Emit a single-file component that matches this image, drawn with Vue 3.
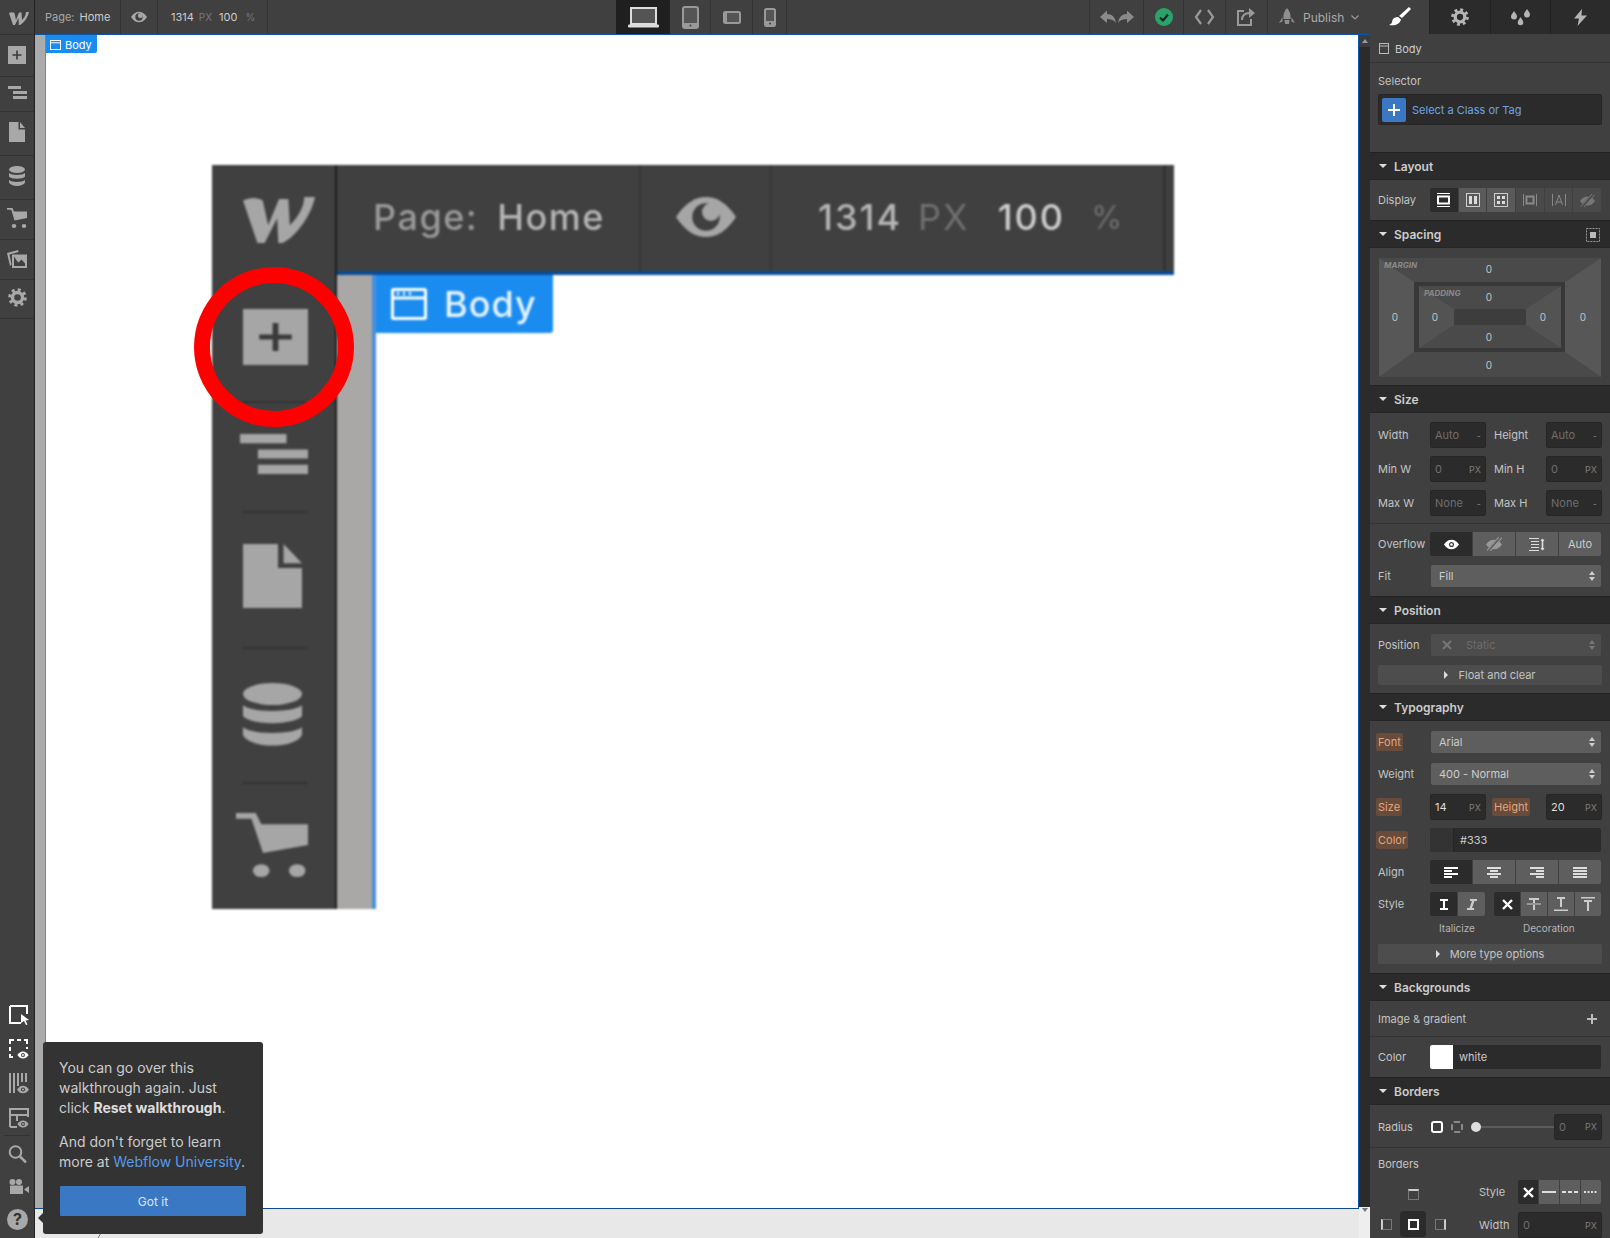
<script setup>
const sizeRows = [
  ['Width', 'Auto', '-', 'Height', 'Auto', '-'],
  ['Min W', '0', 'PX', 'Min H', '0', 'PX'],
  ['Max W', 'None', '-', 'Max H', 'None', '-']
]
const railTop = [
  { id: 'i-plus', w: 18, h: 18, pad: 11, height: 42 },
  { id: 'i-tree', w: 19, h: 13, pad: 9, height: 35 },
  { id: 'i-page', w: 16, h: 20, pad: 10, height: 44 },
  { id: 'i-db', w: 16, h: 20, pad: 10, height: 44 },
  { id: 'i-cart', w: 20, h: 20, pad: 8, height: 40 },
  { id: 'i-media', w: 20, h: 18, pad: 10, height: 40 },
  { id: 'i-gear', w: 19, h: 19, pad: 8, height: 39 }
]
const shotRail = [
  { id: 'i-plus', w: 65, h: 56, top: 36, height: 130, dx: 2 },
  { id: 'i-tree', w: 68, h: 40, top: 31, height: 110, dx: 0 },
  { id: 'i-page', w: 59, h: 64, top: 31, height: 136, dx: -1 },
  { id: 'i-db', w: 59, h: 63, top: 34, height: 135, dx: -1 },
  { id: 'i-cart', w: 72, h: 64, top: 29, height: 125, dx: -2 }
]
</script>

<template>
  <div class="app">
    <svg class="defs" width="0" height="0" aria-hidden="true">
      <symbol id="i-w" viewBox="0 0 20 13" preserveAspectRatio="none"><path d="M0 1C2 0 4 0 5.500 1L7 8 10 .6h2.600L13 8c2-2 4-5 4-8h3c-1 5-5 11-9 13h-1.200L9.500 6 6 13H4Z" /></symbol>
      <symbol id="i-plus" viewBox="0 0 18 18" preserveAspectRatio="none"><rect width="18" height="18" /><path d="M8.200 4.500h1.600V8.200h3.700v1.600H9.800v3.700H8.200V9.800H4.500V8.200h3.700Z" fill="#3a3a3a" /></symbol>
      <symbol id="i-tree" viewBox="0 0 19 13" preserveAspectRatio="none"><path d="M0 0h13v3H0ZM5 5h14v3H5ZM5 10h14v3H5Z" /></symbol>
      <symbol id="i-page" viewBox="0 0 16 20" preserveAspectRatio="none"><path d="M0 0h9.500v7.500H16V20H0ZM11 0l5 6h-5Z" /></symbol>
      <symbol id="i-db" viewBox="0 0 16 20" preserveAspectRatio="none"><ellipse cx="8" cy="3.500" rx="8" ry="3.500" /><path d="M0 7c2 2.500 14 2.500 16 0v3.500c-2 3-14 3-16 0ZM0 14c2 2.500 14 2.500 16 0v2.500c-2 4.500-14 4.500-16 0Z" /></symbol>
      <symbol id="i-cart" viewBox="0 0 20 20" preserveAspectRatio="none"><path d="M0 0h5.500L7 3.500h13V10L7.500 12.500 4.300 1.800H0Z" /><ellipse cx="7" cy="18" rx="2.300" ry="2" /><ellipse cx="17" cy="18" rx="2.300" ry="2" /></symbol>
      <symbol id="i-media" viewBox="0 0 20 18" preserveAspectRatio="none"><path d="M0 3 11 0l.6 2L2.500 4.500l2 10L3 16Z" /><path fill-rule="evenodd" d="M5 4.500h15V18H5ZM7 6.500v9.500h11v-2.500l-3.500-4-3 3-1.500-1.500Z" /></symbol>
      <symbol id="i-gear" viewBox="0 0 20 20"><circle cx="10" cy="10" r="8" fill="none" stroke="currentColor" stroke-width="3.600" stroke-dasharray="3.100 3.180" /><circle cx="10" cy="10" r="5.300" fill="none" stroke="currentColor" stroke-width="3.600" /></symbol>
      <symbol id="i-eye" viewBox="0 0 24 16"><path d="M0 8C4 2 8 0 12 0s8 2 12 8c-4 6-8 8-12 8S4 14 0 8Z" /><circle cx="12" cy="8" r="5.500" fill="#404040" /><circle cx="14" cy="6" r="3.600" /></symbol>
      <symbol id="i-eye2" viewBox="0 0 14 10"><path d="M0 5C2 2 4 .5 7 .5S12 2 14 5c-2 3-4 4.500-7 4.500S2 8 0 5Z" /><circle cx="7" cy="5" r="2.400" fill="#404040" /><circle cx="7" cy="5" r="1.200" /></symbol>
    </svg>

    <!-- left rail -->
    <nav class="rail">
      <div class="rail-logo"><svg class="ic" width="20" height="13"><use href="#i-w" /></svg></div>
      <div v-for="i in railTop" :key="i.id" class="rail-cell" :style="{ height: i.height + 'px', paddingTop: i.pad + 'px' }">
        <svg class="ic" :width="i.w" :height="i.h"><use :href="'#' + i.id" /></svg>
      </div>
      <div class="rail-fill"></div>
      <div class="rail-bottom">
        <svg class="b-cursor" width="21" height="20" viewBox="0 0 21 20"><path d="M1 1h17v8M12 18H1V1" fill="none" stroke="#fff" stroke-width="2" /><path d="M12 9l8 6-3.500.5 2 4-1.500.5-2-4-3 2Z" fill="#fff" /></svg>
        <svg class="b-dash" width="20" height="20" viewBox="0 0 20 20"><path d="M1 5V1h4M8 1h4M15 1h3v4M18 8v2M1 8v4M1 15v3h3" fill="none" stroke="#fff" stroke-width="2" /><use href="#i-eye2" x="8" y="12" width="12" height="8" fill="#fff" /></svg>
        <svg class="b-bars" width="20" height="21" viewBox="0 0 20 21"><path d="M1 0v20M5 0v20M9 0v13M13 0v9M17 0v9" stroke="#a8a8a8" stroke-width="2" fill="none" /><use href="#i-eye2" x="8" y="12" width="12" height="9" fill="#a8a8a8" /></svg>
        <svg class="b-lay" width="20" height="20" viewBox="0 0 20 20"><path d="M1 19V1h18v8M1 7h18M8 7v6M1 19h7" fill="none" stroke="#a8a8a8" stroke-width="2" /><use href="#i-eye2" x="8" y="12" width="12" height="8" fill="#a8a8a8" /></svg>
        <div class="b-sep"></div>
        <svg class="b-search" width="20" height="18" viewBox="0 0 20 18"><circle cx="7.500" cy="7" r="5.800" fill="none" stroke="#a8a8a8" stroke-width="2" /><path d="M12 11.500l6 6" stroke="#a8a8a8" stroke-width="2.500" /></svg>
        <svg class="b-cam" width="20" height="15" viewBox="0 0 20 15"><circle cx="3.500" cy="3" r="3" fill="#a8a8a8" /><circle cx="10" cy="3" r="3" fill="#a8a8a8" /><rect x="1" y="6.500" width="13" height="8.500" fill="#a8a8a8" /><path d="M15 10.500l5-3.500v7Z" fill="#a8a8a8" /></svg>
        <div class="b-help">?</div>
      </div>
    </nav>

    <!-- top bar -->
    <header class="top">
      <div class="top-left">
        <div class="t-page"><span class="dim">Page:</span><span class="lt">Home</span></div>
        <div class="t-eye"><svg class="ic" width="16" height="12"><use href="#i-eye" /></svg></div>
        <div class="t-size"><span class="lt">1314</span><span class="dim2">PX</span><span class="lt ml">100</span><span class="dim2 ml2">%</span></div>
      </div>
      <div class="devices">
        <div class="dev on"><svg width="31" height="21" viewBox="0 0 31 21"><path d="M3 1h25v16H3Z" fill="#555" stroke="#ddd" stroke-width="2" /><rect y="17.500" width="31" height="3" rx="1" fill="#ddd" /></svg></div>
        <div class="dev"><svg width="17" height="23" viewBox="0 0 17 23"><rect x="1" y="1" width="15" height="21" rx="2" fill="#555" stroke="#999" stroke-width="2" /><rect x="1" y="17" width="15" height="5" fill="#999" /><circle cx="8.500" cy="19.500" r="1" fill="#404040" /></svg></div>
        <div class="dev w42"><svg width="18" height="13" viewBox="0 0 18 13"><rect x="1" y="1" width="16" height="11" rx="1.500" fill="#555" stroke="#999" stroke-width="2" /><rect x="1" y="1" width="3" height="11" fill="#999" /></svg></div>
        <div class="dev w34"><svg width="12" height="19" viewBox="0 0 12 19"><rect x="1" y="1" width="10" height="17" rx="1.500" fill="#555" stroke="#999" stroke-width="2" /><rect x="1" y="13" width="10" height="5" fill="#999" /><circle cx="6" cy="15.500" r="1" fill="#404040" /></svg></div>
      </div>
      <div class="top-right">
        <div class="tr w54"><svg width="34" height="14" viewBox="0 0 34 14" fill="#8a8a8a"><path d="M0 7L7 .5V4c5 0 8 3 9 9-2-3-5-4-9-4v4ZM34 7L27 .5V4c-5 0-8 3-9 9 2-3 5-4 9-4v4Z" /></svg></div>
        <div class="tr w40"><svg width="18" height="18" viewBox="0 0 18 18"><circle cx="9" cy="9" r="9" fill="#2aa36b" /><path d="M5 9.500l3 3 5-6" fill="none" stroke="#1c1c1c" stroke-width="2" /></svg></div>
        <div class="tr w42"><svg width="21" height="16" viewBox="0 0 21 16" fill="none" stroke="#999" stroke-width="2.200"><path d="M7 1L2 8l5 7M14 1l5 7-5 7" /></svg></div>
        <div class="tr w42"><svg width="19" height="18" viewBox="0 0 19 18" fill="none" stroke="#999" stroke-width="2"><path d="M7 3H1v14h13v-6" /><path d="M5 12c0-5 3-7 8-7" /><path d="M12 0l6 5-6 5Z" fill="#999" stroke="none" /></svg></div>
        <div class="tr publish">
          <svg width="18" height="18" viewBox="0 0 18 18" fill="#8f8f8f"><path d="M9 0c3 3 4 7 3.500 11h-7C5 7 6 3 9 0ZM4.500 9L1 15l3.500-1.500ZM13.500 9L17 15l-3.500-1.500ZM6.500 12h5l-.5 4H7Z" /></svg>
          <span>Publish</span>
          <svg width="8" height="5" viewBox="0 0 8 5" fill="none" stroke="#999" stroke-width="1.200"><path d="M.5.500L4 4 7.500.500" /></svg>
        </div>
      </div>
    </header>

    <!-- right panel -->
    <aside class="panel">
      <div class="tabs">
        <div class="tab on"><svg width="22" height="20" viewBox="0 0 22 20" fill="#fff"><path d="M20 0l2 2-9 9-3-2ZM9 10l3 2.500C11 17 6 19 0 18c3-1 3-3 3.500-5S7 10 9 10Z" /></svg></div>
        <div class="tab"><svg class="g" width="18" height="18"><use href="#i-gear" /></svg></div>
        <div class="tab"><svg width="19" height="17" viewBox="0 0 19 17" fill="#b5b5b5"><path d="M3 2c2 3 3 4 3 5.500a3 3 0 0 1-6 0C0 6 1 5 3 2ZM16 0c2 3 3 4 3 5.500a3 3 0 0 1-6 0C13 4 14 3 16 0ZM9.500 8c1.800 3 2.800 4 2.800 5.500a2.800 2.800 0 0 1-5.600 0C6.700 12 7.700 11 9.500 8Z" /></svg></div>
        <div class="tab"><svg width="13" height="17" viewBox="0 0 13 17" fill="#b5b5b5"><path d="M8 0L0 9.500h5L3.500 17 13 6.500H7.500Z" /></svg></div>
      </div>

      <div class="p-body"><svg width="10" height="11" viewBox="0 0 10 11" fill="none" stroke="#bbb"><rect x=".5" y=".5" width="9" height="10" /><path d="M.5 3h9" /></svg><span>Body</span></div>
      <div class="p-sel">
        <div class="l">Selector</div>
        <div class="sel-in"><div class="sel-plus"><svg width="12" height="12" viewBox="0 0 12 12" fill="#fff"><path d="M5 0h2v5h5v2H7v5H5V7H0V5h5Z" /></svg></div><span>Select a Class or Tag</span></div>
      </div>

      <div class="hdr"><i></i>Layout</div>
      <div class="row-display">
        <span class="l">Display</span>
        <div class="seg h24 wide">
          <div class="dk"><svg width="13" height="14" viewBox="0 0 13 14" fill="none" stroke="#fff"><path d="M0 .5h13M0 13.500h13" /><rect x="1" y="3.500" width="11" height="7" stroke-width="2" /></svg></div>
          <div class="md"><svg width="14" height="14" viewBox="0 0 14 14"><rect x=".5" y=".5" width="13" height="13" fill="none" stroke="#ccc" /><path d="M3 3h3v8H3ZM8 3h3v8H8Z" fill="#ddd" /></svg></div>
          <div class="md"><svg width="14" height="14" viewBox="0 0 14 14"><rect x=".5" y=".5" width="13" height="13" fill="none" stroke="#ccc" /><path d="M3 3h3v3H3ZM8 3h3v3H8ZM3 8h3v3H3ZM8 8h3v3H8Z" fill="#ddd" /></svg></div>
          <div class="lo"><svg width="14" height="12" viewBox="0 0 14 12" fill="none" stroke="#888"><path d="M.5 0v12M13.500 0v12" /><rect x="3.500" y="2.500" width="7" height="7" stroke-width="2" /></svg></div>
          <div class="lo"><svg width="14" height="12" viewBox="0 0 14 12" fill="none" stroke="#888"><path d="M.5 0v12M13.500 0v12M3.500 11L7 1l3.500 10M4.500 8h5" /></svg></div>
          <div class="lo"><svg width="15" height="13" viewBox="0 0 15 13"><path d="M0 7C2 4 4.500 2.500 7.500 2.500S13 4 15 7c-2 3-4.500 4.500-7.500 4.500S2 10 0 7Z" fill="#777" /><path d="M2 13L13 0" stroke="#4a4a4a" stroke-width="3" /><path d="M1 12.500L12 0M4 13L15 .5" stroke="#777" /></svg></div>
        </div>
      </div>

      <div class="hdr"><i></i>Spacing
        <svg class="sp-ic" width="14" height="14" viewBox="0 0 14 14"><rect x=".5" y=".5" width="13" height="13" fill="none" stroke="#999" stroke-dasharray="2 1" /><rect x="4" y="4" width="6" height="6" fill="#bbb" /></svg>
      </div>
      <div class="spacing">
        <svg width="222" height="119" viewBox="0 0 222 119">
          <rect width="222" height="119" fill="#4d4d4d" stroke="#3a3a3a" />
          <path d="M0 0L35 24V94L0 119ZM222 0L186 24V94L222 119Z" fill="#575757" />
          <path d="M0 0L35 24H186L222 0ZM0 119L35 94H186L222 119Z" fill="#4a4a4a" />
          <rect x="35" y="24" width="151" height="70" rx="1" fill="#383838" />
          <rect x="40" y="28" width="142" height="62" fill="#4a4a4a" />
          <path d="M40 28L75 51V67L40 90ZM182 28L147 51V67L182 90Z" fill="#535353" />
          <rect x="75" y="51" width="72" height="16" rx="1" fill="#3d3d3d" />
          <text class="tag" x="5" y="9.500">MARGIN</text>
          <text class="tag" x="45" y="37.500">PADDING</text>
          <text class="v" x="110" y="15">0</text>
          <text class="v" x="110" y="43">0</text>
          <text class="v" x="16" y="63">0</text>
          <text class="v" x="56" y="63">0</text>
          <text class="v" x="164" y="63">0</text>
          <text class="v" x="204" y="63">0</text>
          <text class="v" x="110" y="83">0</text>
          <text class="v" x="110" y="111">0</text>
        </svg>
      </div>

      <div class="hdr"><i></i>Size</div>
      <div class="size-grid">
        <div v-for="r in sizeRows" :key="r[0]" class="size-row">
          <span class="l lw">{{ r[0] }}</span>
          <div class="inp"><span class="ph">{{ r[1] }}</span><em>{{ r[2] }}</em></div>
          <span class="l lw2">{{ r[3] }}</span>
          <div class="inp"><span class="ph">{{ r[4] }}</span><em>{{ r[5] }}</em></div>
        </div>
      </div>
      <div class="over">
        <div class="frow">
          <span class="l">Overflow</span>
          <div class="seg h24 wide">
            <div class="dk"><svg width="15" height="11" viewBox="0 0 14 10"><use href="#i-eye2" width="14" height="10" fill="#fff" /></svg></div>
            <div class="br"><svg width="16" height="14" viewBox="0 0 15 13"><path d="M0 7C2 4 4.500 2.500 7.500 2.500S13 4 15 7c-2 3-4.500 4.500-7.500 4.500S2 10 0 7Z" fill="#999" /><path d="M2 13L13 0" stroke="#5e5e5e" stroke-width="3" /><path d="M1 12.500L12 0M4 13L15 .5" stroke="#999" /></svg></div>
            <div class="br"><svg width="16" height="13" viewBox="0 0 16 13" fill="none" stroke="#ddd"><path d="M0 .5h10M2 3.500h8M2 6.500h8M2 9.500h8M0 12.500h10" /><path d="M13.500 1v11" stroke-width="1.600" /><path d="M11.500 3l2-2.500 2 2.500ZM11.500 10l2 2.500 2-2.500Z" fill="#ddd" stroke="none" /></svg></div>
            <div class="br txt">Auto</div>
          </div>
        </div>
        <div class="frow mt9"><span class="l">Fit</span><div class="select h22"><span>Fill</span><b></b></div></div>
      </div>

      <div class="hdr"><i></i>Position</div>
      <div class="pos">
        <div class="frow"><span class="l">Position</span><div class="select h22 off"><svg width="10" height="10" viewBox="0 0 10 10" stroke="#777" stroke-width="2"><path d="M1 1l8 8M9 1l-8 8" /></svg><span class="st">Static</span><b></b></div></div>
        <div class="expand mt9 h20"><i></i>Float and clear</div>
      </div>

      <div class="hdr"><i></i>Typography</div>
      <div class="typo">
        <div class="frow"><span class="l"><mark>Font</mark></span><div class="select h22"><span>Arial</span><b></b></div></div>
        <div class="frow mt10"><span class="l">Weight</span><div class="select h22"><span>400 - Normal</span><b></b></div></div>
        <div class="size-row mt9">
          <span class="l lw"><mark>Size</mark></span>
          <div class="inp"><span>14</span><em>PX</em></div>
          <span class="l lw2"><mark>Height</mark></span>
          <div class="inp"><span>20</span><em>PX</em></div>
        </div>
        <div class="frow mt8"><span class="l"><mark>Color</mark></span><div class="color"><div class="sw dark"></div><span>#333</span></div></div>
        <div class="frow mt8">
          <span class="l">Align</span>
          <div class="seg h24 wide">
            <div class="dk"><svg width="14" height="11" viewBox="0 0 14 11" fill="#fff"><path d="M0 0h14v2H0ZM0 3h8v2H0ZM0 6h14v2H0ZM0 9h8v2H0Z" /></svg></div>
            <div class="br"><svg width="14" height="11" viewBox="0 0 14 11" fill="#ddd"><path d="M0 0h14v2H0ZM3 3h8v2H3ZM0 6h14v2H0ZM3 9h8v2H3Z" /></svg></div>
            <div class="br"><svg width="14" height="11" viewBox="0 0 14 11" fill="#ddd"><path d="M0 0h14v2H0ZM6 3h8v2H6ZM0 6h14v2H0ZM6 9h8v2H6Z" /></svg></div>
            <div class="br"><svg width="14" height="11" viewBox="0 0 14 11" fill="#ddd"><path d="M0 0h14v2H0ZM0 3h14v2H0ZM0 6h14v2H0ZM0 9h14v2H0Z" /></svg></div>
          </div>
        </div>
        <div class="frow mt8 style-row">
          <span class="l">Style</span>
          <div class="seg h24 s2">
            <div class="dk"><svg width="8" height="11" viewBox="0 0 8 11" fill="#fff"><path d="M0 0h8v2H5v7h3v2H0V9h3V2H0Z" /></svg></div>
            <div class="br"><svg width="10" height="11" viewBox="0 0 10 11" fill="#ccc"><path d="M3 0h7v2H7.500L5 9h2v2H0V9h2.500L5 2H3Z" /></svg></div>
          </div>
          <div class="seg h24 s4">
            <div class="dk"><svg width="11" height="11" viewBox="0 0 11 11" stroke="#fff" stroke-width="2.400"><path d="M1 1l9 9M10 1l-9 9" /></svg></div>
            <div class="br"><svg width="14" height="12" viewBox="0 0 14 12" fill="#ccc"><path d="M2 0h10v2H8v3H6V2H2ZM0 5.500h14v1H0ZM6 7h2v5H6Z" /></svg></div>
            <div class="br"><svg width="14" height="14" viewBox="0 0 14 14" fill="#ccc"><path d="M3 0h8v2H8v8H6V2H3ZM0 12.500h14v1.500H0Z" /></svg></div>
            <div class="br"><svg width="14" height="14" viewBox="0 0 14 14" fill="#ccc"><path d="M0 0h14v1.500H0ZM3 3h8v2H8v9H6V5H3Z" /></svg></div>
          </div>
        </div>
        <div class="caps"><span>Italicize</span><span>Decoration</span></div>
        <div class="expand mt8 h20"><i></i>More type options</div>
      </div>

      <div class="hdr"><i></i>Backgrounds</div>
      <div class="img-row"><span class="l">Image &amp; gradient</span><svg width="10" height="10" viewBox="0 0 10 10" fill="#bbb"><path d="M4 0h2v4h4v2H6v4H4V6H0V4h4Z" /></svg></div>
      <div class="bg-color frow"><span class="l">Color</span><div class="color"><div class="sw"></div><span>white</span></div></div>

      <div class="hdr"><i></i>Borders</div>
      <div class="radius">
        <span class="l">Radius</span>
        <div class="r-ic on"></div><div class="r-ic dash"></div>
        <div class="slider"><div class="knob"></div></div>
        <div class="inp r-in"><span class="ph">0</span><em>PX</em></div>
      </div>
      <div class="borders">
        <div class="l">Borders</div>
        <div class="bd-grid">
          <div class="bd-pick">
            <div class="bi top"></div>
            <div class="bi left"></div><div class="bi-on"><div class="bi all"></div></div><div class="bi right"></div>
          </div>
          <div class="bd-ctl">
            <div class="bd-line">
              <span class="l">Style</span>
              <div class="seg h24 bs">
                <div class="dk"><svg width="11" height="11" viewBox="0 0 11 11" stroke="#fff" stroke-width="2.400"><path d="M1 1l9 9M10 1l-9 9" /></svg></div>
                <div class="br"><svg width="14" height="2"><rect width="14" height="2" fill="#ddd" /></svg></div>
                <div class="br"><svg width="16" height="2"><path d="M0 1h16" stroke="#ddd" stroke-width="2" stroke-dasharray="4 2" /></svg></div>
                <div class="br"><svg width="14" height="2"><path d="M0 1h14" stroke="#ddd" stroke-width="2" stroke-dasharray="2 1.500" /></svg></div>
              </div>
            </div>
            <div class="bd-line mt8">
              <span class="l">Width</span>
              <div class="inp bw"><span class="ph">0</span><em>PX</em></div>
            </div>
          </div>
        </div>
      </div>
    </aside>

    <!-- canvas -->
    <main class="main">
      <div class="stage">
        <div class="view">
          <div class="gutter"></div>
          <div class="page">
            <div class="body-tag"><svg width="11" height="10" viewBox="0 0 11 10" fill="none" stroke="#fff"><rect x=".5" y=".5" width="10" height="9" /><path d="M.5 2.800h10" /></svg><span>Body</span></div>
            <div class="shot">
              <div class="shot-img">
                <div class="s-rail">
                  <div class="s-logo"><svg class="sic" width="72" height="46"><use href="#i-w" /></svg></div>
                  <div v-for="i in shotRail" :key="i.id" class="s-cell" :style="{ height: i.height + 'px', paddingTop: i.top + 'px' }">
                    <svg class="sic" :width="i.w" :height="i.h" :style="{ transform: 'translateX(' + i.dx + 'px)' }"><use :href="'#' + i.id" /></svg>
                  </div>
                </div>
                <div class="s-main">
                  <div class="s-top">
                    <div class="s-a"><span class="g1">Page:</span><span class="g2">Home</span></div>
                    <div class="s-b"><svg class="sic" width="60" height="42"><use href="#i-eye" /></svg></div>
                    <div class="s-c"><span class="g2">1314</span><span class="g3">PX</span><span class="g4">100</span><span class="g5">%</span></div>
                  </div>
                  <div class="s-under">
                    <div class="s-gutter"></div>
                    <div class="s-page">
                      <div class="s-tag"><svg width="36" height="32" viewBox="0 0 36 32" fill="none" stroke="#fff" stroke-width="3"><rect x="1.500" y="1.500" width="33" height="29" rx="1" /><path d="M1.500 10h33" /><path d="M6 5.500h2M12 5.500h2M18 5.500h2" /></svg><span>Body</span></div>
                    </div>
                  </div>
                </div>
              </div>
              <div class="ring"></div>
            </div>
          </div>
        </div>
        <div class="under"><svg class="nick" width="4" height="5" viewBox="0 0 4 5"><path d="M0 5L3 0" stroke="#777" /></svg></div>
      </div>
      <div class="scroll"><div class="sc-top"><span></span></div><div class="sc-end"><span></span></div></div>
    </main>

    <!-- tooltip -->
    <div class="tip">
      <p>You can go over this walkthrough again. Just click <strong>Reset walkthrough</strong>.</p>
      <p>And don't forget to learn more at <a>Webflow University</a>.</p>
      <button>Got it</button>
      <span class="tip-arrow"></span>
    </div>
  </div>
</template>

<style>
html, body { margin: 0; background: #404040; }
</style>

<style scoped>
.app { position: relative; width: 1610px; height: 1238px; overflow: hidden; display: grid; grid-template-columns: 35px 1fr 240px; grid-template-rows: 35px 1fr; font-family: Inter, "Liberation Sans", sans-serif; font-size: 11px; color: #ccc; background: #404040; }
.defs { position: absolute; }
.ic { fill: #a8a8a8; color: #a8a8a8; display: block; }

/* rail */
.rail { grid-column: 1; grid-row: 1 / 3; background: #404040; border-right: 1px solid #222; display: flex; flex-direction: column; align-items: stretch; height: 1238px; box-sizing: border-box; }
.rail-logo { height: 34px; box-sizing: border-box; padding: 12px 0 0 9px; }
.rail-cell { box-sizing: border-box; display: flex; justify-content: center; border-top: 1px solid #333; }
.rail-fill { flex: 1; border-top: 1px solid #333; }
.rail-bottom { height: 238px; display: flex; flex-direction: column; align-items: flex-start; padding-left: 9px; box-sizing: border-box; padding-top: 5px; }
.rail-bottom svg { display: block; flex: none; }
.b-dash { margin-top: 14px; }
.b-bars { margin-top: 14px; }
.b-lay { margin-top: 14px; }
.b-sep { width: 26px; height: 1px; background: #333; margin: 7px 0 0 -5px; flex: none; }
.b-search { margin-top: 9px; margin-left: -1px; }
.b-cam { margin-top: 16px; }
.b-help { width: 21px; height: 21px; border-radius: 50%; background: #a8a8a8; color: #333; font-weight: 700; font-size: 16px; line-height: 21px; text-align: center; margin: 15px 0 0 -2px; flex: none; }

/* top */
.top { grid-column: 2; grid-row: 1; background: #404040; border-bottom: 1px solid #0d56a6; position: relative; display: flex; justify-content: space-between; height: 35px; box-sizing: border-box; }
.top-left { display: flex; height: 34px; }
.top-left > div { display: flex; align-items: center; border-right: 1px solid #333; box-sizing: border-box; }
.t-page { width: 86px; padding-left: 10px; }
.t-page .dim { color: #a8a8a8; }
.t-page .lt { margin-left: 5px; color: #ccc; }
.t-eye { width: 37px; justify-content: center; }
.t-size { width: 110px; padding-left: 13px; }
.t-size .lt { color: #ccc; }
.t-size .dim2 { color: #777; margin-left: 5px; font-size: 10px; }
.t-size .ml { margin-left: 7px; }
.t-size .ml2 { margin-left: 8px; }
.devices { display: flex; height: 34px; position: absolute; left: 581px; top: 0; }
.dev { width: 41px; display: flex; align-items: center; justify-content: center; border-right: 1px solid #333; box-sizing: border-box; }
.dev.on { width: 54px; background: #1f1f1f; border-right: 0; }
.dev.w42 { width: 42px; } .dev.w34 { width: 34px; }
.top-right { display: flex; height: 34px; }
.tr { display: flex; align-items: center; justify-content: center; border-left: 1px solid #333; box-sizing: border-box; }
.w54 { width: 54px; } .w40 { width: 40px; } .w42 { width: 42px; }
.publish { width: 103px; gap: 7px; justify-content: flex-start; padding-left: 10px; color: #aaa; font-size: 12px; }

/* panel */
.panel { grid-column: 3; grid-row: 1 / 3; background: #404040; width: 240px; height: 1238px; overflow: hidden; z-index: 2; }
.tabs { display: flex; height: 34px; }
.tab { flex: 1; display: flex; align-items: center; justify-content: center; background: #2b2b2b; border-left: 1px solid #222; }
.tab.on { background: #404040; border-left: 0; }
.tab .g { color: #b5b5b5; }
.p-body { height: 29px; box-sizing: border-box; border-bottom: 1px solid #333; display: flex; align-items: center; gap: 6px; padding: 1px 0 0 9px; color: #ccc; }
.p-sel { height: 89px; padding: 10px 8px 0 8px; box-sizing: border-box; }
.p-sel .l { line-height: 16px; }
.sel-in { margin-top: 5px; height: 31px; background: #2b2b2b; border: 1px solid #262626; border-radius: 2px; box-sizing: border-box; display: flex; align-items: center; padding-left: 3px; gap: 6px; color: #6fa3e6; }
.sel-plus { width: 24px; height: 24px; background: #3b78c4; border-radius: 2px; display: flex; align-items: center; justify-content: center; }
.l { color: #c4c4c4; white-space: nowrap; }
.hdr { height: 28px; box-sizing: border-box; background: #2b2b2b; border-top: 1px solid #222; border-bottom: 1px solid #262626; display: flex; align-items: center; padding-left: 9px; font-size: 12px; font-weight: 600; color: #ccc; gap: 7px; position: relative; }
.hdr i { width: 0; height: 0; border-left: 4px solid transparent; border-right: 4px solid transparent; border-top: 4px solid #ddd; }
.sp-ic { position: absolute; right: 10px; top: 7px; }
.row-display { height: 40px; display: flex; align-items: center; padding: 0 9px 0 8px; justify-content: space-between; box-sizing: border-box; }
.seg { display: flex; border-radius: 2px; overflow: hidden; }
.seg > div { flex: 1; display: flex; align-items: center; justify-content: center; box-sizing: border-box; }
.h24 { height: 24px; } .h22 { height: 22px; } .h20 { height: 20px; }
.wide { width: 171px; }
.dk { background: #2b2b2b; }
.md { background: #5a5a5a; border-left: 1px solid #404040; }
.lo { background: #4a4a4a; border-left: 1px solid #404040; }
.br { background: #5e5e5e; border-left: 1px solid #404040; }
.txt { color: #ccc; }
.spacing { height: 137px; padding: 10px 0 0 9px; box-sizing: border-box; }
.spacing svg { display: block; }
.tag { font: italic 700 8px Inter, "Liberation Sans", sans-serif; fill: #8a8a8a; }
.v { font: 10px Inter, "Liberation Sans", sans-serif; fill: #c4c4c4; text-anchor: middle; }
.size-grid { padding: 9px 8px 8px; display: flex; flex-direction: column; gap: 8px; border-bottom: 1px solid #333; height: 111px; box-sizing: border-box; }
.size-row { display: flex; align-items: center; height: 26px; }
.lw { width: 52px; flex: none; }
.lw2 { width: 52px; margin-left: 8px; flex: none; }
.inp { width: 56px; height: 26px; box-sizing: border-box; background: #2b2b2b; border: 1px solid #262626; border-radius: 2px; display: flex; justify-content: space-between; align-items: center; padding: 0 4px; color: #ddd; flex: none; }
.inp .ph { color: #6e6e6e; }
.inp em { font-style: normal; color: #7d7d7d; font-size: 9px; }
.over { padding: 8px 9px 0 8px; height: 72px; box-sizing: border-box; }
.frow { display: flex; align-items: center; justify-content: space-between; }
.mt8 { margin-top: 8px; } .mt9 { margin-top: 9px; } .mt10 { margin-top: 10px; }
.select { width: 170px; background: #5e5e5e; border-radius: 2px; display: flex; align-items: center; padding-left: 8px; box-sizing: border-box; color: #ccc; position: relative; }
.select b { position: absolute; right: 6px; top: 6px; width: 0; height: 0; border-left: 3px solid transparent; border-right: 3px solid transparent; border-bottom: 4px solid #ccc; }
.select b::after { content: ""; position: absolute; left: -3px; top: 6px; border-left: 3px solid transparent; border-right: 3px solid transparent; border-top: 4px solid #ccc; }
.select.off { background: #4d4d4d; padding-left: 11px; }
.select.off b, .select.off b::after { border-bottom-color: #777; border-top-color: #777; }
.st { color: #6c6c6c; margin-left: 14px; }
.pos { padding: 10px 8px 0; height: 69px; box-sizing: border-box; }
.pos .frow { padding-right: 1px; }
.expand { background: #4d4d4d; border-radius: 2px; display: flex; align-items: center; justify-content: center; gap: 10px; color: #c4c4c4; }
.expand i { width: 0; height: 0; border-top: 4px solid transparent; border-bottom: 4px solid transparent; border-left: 4px solid #ddd; }
.typo { padding: 10px 8px 0; height: 252px; box-sizing: border-box; }
.typo .frow { padding-right: 1px; }
mark { background: #674b3b; color: #e4a47e; padding: 2px 2px; margin-left: -2px; border-radius: 2px; }
.color { width: 171px; height: 24px; background: #2b2b2b; border-radius: 2px; display: flex; align-items: center; box-sizing: border-box; color: #ccc; overflow: hidden; }
.sw { width: 23px; height: 24px; background: #fff; margin-right: 6px; flex: none; }
.sw.dark { background: #333; border-right: 1px solid #262626; }
.style-row { justify-content: flex-start; }
.style-row .l { width: 52px; }
.s2 { width: 55px; } .s4 { width: 107px; margin-left: 9px; }
.caps { display: flex; height: 16px; margin-top: 4px; font-size: 10px; color: #b5b5b5; align-items: center; }
.caps span:first-child { margin-left: 61px; }
.caps span:last-child { margin-left: 48px; }
.img-row { height: 36px; box-sizing: border-box; border-bottom: 1px solid #333; display: flex; align-items: center; justify-content: space-between; padding: 0 13px 0 8px; }
.bg-color { height: 40px; padding: 0 9px 0 8px; box-sizing: border-box; }
.radius { height: 43px; border-bottom: 1px solid #333; box-sizing: border-box; display: flex; align-items: center; padding: 1px 8px 0; }
.radius .l { width: 54px; }
.r-ic { width: 12px; height: 12px; border-radius: 3px; box-sizing: border-box; margin-right: 8px; }
.r-ic.on { border: 2px solid #fff; }
.r-ic.dash { border: 2px dashed #888; }
.slider { position: relative; width: 79px; height: 2px; background: #5c5c5c; margin-left: 5px; }
.knob { position: absolute; left: -5px; top: -4px; width: 10px; height: 10px; border-radius: 50%; background: #ddd; }
.r-in { width: 48px; margin-left: auto; }
.borders { padding: 8px 8px 0; }
.borders > .l { line-height: 16px; }
.bd-grid { display: flex; margin-top: 8px; }
.bd-pick { width: 70px; flex: none; position: relative; height: 58px; }
.bi { width: 11px; height: 11px; box-sizing: border-box; border: 1px solid #777; }
.bi.top { position: absolute; left: 30px; top: 9px; border-top: 2px solid #ccc; }
.bi.left { position: absolute; left: 3px; top: 39px; border-left: 2px solid #ccc; }
.bi.right { position: absolute; left: 57px; top: 39px; border-right: 2px solid #ccc; }
.bi-on { position: absolute; left: 22px; top: 31px; width: 26px; height: 26px; background: #2b2b2b; border-radius: 3px; display: flex; align-items: center; justify-content: center; }
.bi.all { border: 2px solid #fff; }
.bd-ctl { flex: 1; }
.bd-line { display: flex; align-items: center; justify-content: space-between; padding-left: 31px; }
.bs { width: 83px; margin-right: 1px; }
.bw { width: 84px; }

/* canvas */
.main { grid-column: 2; grid-row: 2; display: flex; height: 1203px; min-width: 0; }
.stage { flex: 1; display: flex; flex-direction: column; min-width: 0; }
.view { height: 1174px; display: flex; border-bottom: 1px solid #0d4a90; box-sizing: border-box; flex: none; }
.gutter { width: 10px; background: #ababab; flex: none; }
.page { flex: 1; background: #fff; border-left: 1px solid #3f92e8; border-right: 1px solid #0d56a6; position: relative; box-sizing: border-box; padding: 130px 0 0 166px; }
.body-tag { position: absolute; left: 0; top: 0; width: 51px; height: 18px; background: #1a8cf0; color: #fff; display: flex; align-items: center; gap: 4px; padding: 1px 0 0 4px; box-sizing: border-box; border-radius: 0 0 2px 0; }
.under { flex: 1; background: #e8e8e8; position: relative; }
.nick { position: absolute; left: 63px; bottom: 0; }
.scroll { width: 11px; background: #2b2b2b; flex: none; position: relative; }
.sc-top { height: 12px; background: #3c3c3c; display: flex; justify-content: center; padding-top: 4px; box-sizing: border-box; }
.sc-top span { border-left: 3px solid transparent; border-right: 3px solid transparent; border-bottom: 4px solid #999; height: 0; }
.sc-end { position: absolute; left: 0; right: 0; top: 1172px; bottom: 0; background: #eee; display: flex; justify-content: center; padding-top: 1px; }
.sc-end span { border-left: 3px solid transparent; border-right: 3px solid transparent; border-top: 4px solid #777; height: 0; }

/* inner screenshot */
.shot { position: relative; width: 962px; height: 744px; }
.shot-img { display: flex; width: 962px; height: 744px; filter: blur(1px); }
.sic { fill: #a6a6a6; display: block; }
.s-rail { width: 123px; background: #404040; border-right: 2px solid #1d1d1d; flex: none; }
.s-logo { height: 108px; box-sizing: border-box; padding: 32px 0 0 31px; }
.s-cell { box-sizing: border-box; display: flex; justify-content: center; position: relative; }
.s-cell::after { content: ""; position: absolute; left: 30px; width: 65px; bottom: 0; height: 2px; background: #333; }
.s-cell:last-child::after { display: none; }
.s-main { flex: 1; display: flex; flex-direction: column; min-width: 0; }
.s-top { height: 110px; background: #404040; border-bottom: 4px solid #0b4a94; box-sizing: border-box; display: flex; font-size: 36px; font-weight: 500; }
.s-top > div { display: flex; align-items: center; border-right: 2px solid #353535; box-sizing: border-box; padding-bottom: 2px; }
.s-a { width: 304px; padding-left: 36px; letter-spacing: 1.5px; }
.s-b { width: 131px; justify-content: center; }
.s-c { width: 394px; padding-left: 46px; letter-spacing: 2px; }
.s-top > .s-c { border-right: 3px solid #333; }
.g1 { color: #999; } .g2 { color: #b5b5b5; } .g3 { color: #707070; margin-left: 16px; font-weight: 400; } .g4 { color: #ccc; margin-left: 28px; } .g5 { color: #6e6e6e; margin-left: 26px; font-size: 32px; font-weight: 400; }
.g1 + .g2 { margin-left: 19px; }
.s-under { flex: 1; display: flex; }
.s-gutter { width: 35px; background: #a9a8a6; flex: none; }
.s-page { flex: 1; background: #fff; border-left: 4px solid #4a8fdc; }
.s-tag { width: 177px; height: 58px; background: #1a8cf0; color: #e6f4ff; display: flex; align-items: center; gap: 17px; padding-left: 15px; box-sizing: border-box; font-size: 36px; font-weight: 500; border-radius: 0 0 3px 0; letter-spacing: 1px; }
.ring { position: absolute; left: -18px; top: 102px; width: 160px; height: 160px; box-sizing: border-box; border: 16px solid #ff0000; border-radius: 50%; }

/* tooltip */
.tip { position: absolute; left: 43px; top: 1042px; width: 220px; height: 192px; background: #333; border-radius: 3px; padding: 16px 16px 0 16px; box-sizing: border-box; color: #ccc; font-size: 14px; line-height: 20px; z-index: 3; }
.tip p { margin: 0 0 14px; }
.tip strong { font-weight: 700; color: #ddd; }
.tip a { color: #5a9bea; }
.tip button { display: block; width: 186px; height: 30px; background: #3b78c4; border: 0; border-radius: 1px; color: #d8e6f7; font: 12px Inter, "Liberation Sans", sans-serif; margin: 0 0 0 1px; padding: 0; }
.tip-arrow { position: absolute; left: -5px; top: 171px; border-top: 5px solid transparent; border-bottom: 5px solid transparent; border-right: 5px solid #333; }
</style>
